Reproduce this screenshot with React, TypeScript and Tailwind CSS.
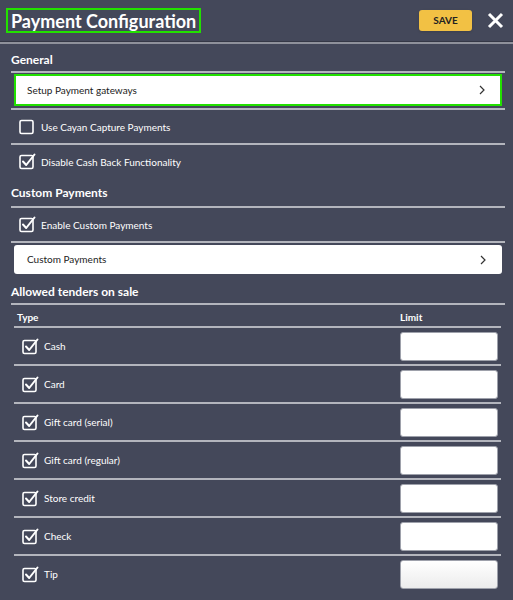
import React from "react";

const FONT = { fontFamily: "Lato, 'Noto Sans', Arial, sans-serif" };

function CheckIcon({ checked }: { checked: boolean }) {
  return (
    <svg width="17" height="17" viewBox="0 0 17 17" className="shrink-0">
      <rect x="1" y="2.5" width="13" height="13" rx="1.5" fill="none" stroke="#ffffff" strokeWidth="1.6" />
      {checked && (
        <path d="M4 8.5 L7.2 12 L15.5 1.5" fill="none" stroke="#ffffff" strokeWidth="2" strokeLinecap="round" strokeLinejoin="round" />
      )}
    </svg>
  );
}

function Chevron() {
  return (
    <svg width="8" height="10" viewBox="0 0 8 10">
      <path d="M2 1 L6 5 L2 9" fill="none" stroke="#333" strokeWidth="1.2" />
    </svg>
  );
}

function CheckRow({ label, checked, line = true }: { label: string; checked: boolean; line?: boolean }) {
  return (
    <div className={`flex items-center gap-[5px] h-[33px] box-content pl-[8px] ${line ? "border-b-2 border-[#b3b5bd]" : ""}`}>
      <CheckIcon checked={checked} />
      <span className="text-[10px] text-white leading-none">{label}</span>
    </div>
  );
}

const TENDERS = ["Cash", "Card", "Gift card (serial)", "Gift card (regular)", "Store credit", "Check", "Tip"];

export default function App() {
  return (
    <div className="w-[513px] h-[600px] bg-[#44485a] overflow-hidden" style={FONT}>
      <div className="flex items-center justify-between h-[41px] pl-[6px] pr-[9px]">
        <h1 className="border-2 border-[#22e000] px-[3px] h-[25px] flex items-center text-[18px] font-bold text-white leading-none">
          Payment Configuration
        </h1>
        <div className="flex items-center gap-[15px]">
          <button className="bg-[#f2c144] rounded-[3px] w-[53px] h-[21px] text-[10px] font-bold text-[#222] shadow-sm">
            SAVE
          </button>
          <svg width="17" height="17" viewBox="0 0 17 17">
            <path d="M2 2 L15 15 M15 2 L2 15" stroke="#ffffff" strokeWidth="3" />
          </svg>
        </div>
      </div>
      <div className="border-t border-[#353846]" />
      <div className="border-t-2 border-[#8f919b]" />

      <div className="pl-[11px] pr-[8px]">
        <div className="h-[27px] box-content flex items-end pb-[0px] text-[12px] leading-none font-bold text-white border-b-2 border-[#b3b5bd]">
          <span className="pb-[5px]">General</span>
        </div>
        <div className="pt-[1px] pb-[2px] px-[3px] border-b-2 border-[#b3b5bd]">
          <div className="flex items-center justify-between bg-white border-2 border-[#22e000] h-[32px] pl-[11px] pr-[14px]">
            <span className="text-[10px] text-[#222]">Setup Payment gateways</span>
            <Chevron />
          </div>
        </div>
        <CheckRow label="Use Cayan Capture Payments" checked={false} />
        <CheckRow label="Disable Cash Back Functionality" checked line={false} />

        <div className="h-[28px] box-content flex items-end text-[12px] leading-none font-bold text-white border-b-2 border-[#b3b5bd]">
          <span className="pb-[7px]">Custom Payments</span>
        </div>
        <CheckRow label="Enable Custom Payments" checked />
        <div className="pt-[2px] px-[3px]">
          <div className="flex items-center justify-between bg-white rounded-[3px] h-[29px] pl-[13px] pr-[15px]">
            <span className="text-[10px] text-[#222]">Custom Payments</span>
            <Chevron />
          </div>
        </div>

        <div className="h-[29px] box-content flex items-end text-[12px] leading-none font-bold text-white border-b-2 border-[#b3b5bd]">
          <span className="pb-[5px]">Allowed tenders on sale</span>
        </div>
        <div className="pl-[3px] pr-[4px]">
          <div className="flex items-end justify-between h-[21px] box-content border-b-2 border-[#b3b5bd] text-[10px] leading-none font-bold text-white">
            <span className="pl-[3px] pb-[4px]">Type</span>
            <span className="w-[98px] mr-[3px] pb-[4px]">Limit</span>
          </div>
          {TENDERS.map((t, i) => (
            <div
              key={t}
              className={`flex items-center justify-between h-[36px] box-content ${i < TENDERS.length - 1 ? "border-b-2 border-[#b3b5bd]" : ""}`}
            >
              <div className="flex items-center gap-[5px] pl-[8px]">
                <CheckIcon checked />
                <span className="text-[10px] text-white leading-none">{t}</span>
              </div>
              <div
                className={`w-[98px] h-[29px] rounded-[3px] border border-[#9ea1ab] mr-[3px] ${i === TENDERS.length - 1 ? "bg-gradient-to-b from-white to-[#ececec]" : "bg-white"}`}
              />
            </div>
          ))}
        </div>
      </div>
    </div>
  );
}
